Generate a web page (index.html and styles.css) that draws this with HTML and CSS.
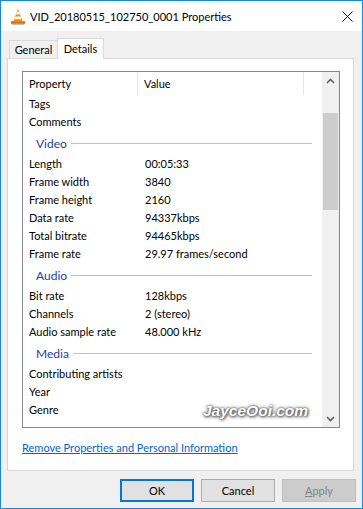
FILE: index.html
```html
<!DOCTYPE html>
<html lang="en">
  <head>
    <meta charset="UTF-8" />
    <meta name="viewport" content="width=device-width, initial-scale=1.0" />
    <title>VID_20180515_102750_0001 Properties</title>
    <link rel="stylesheet" href="styles.css">
  </head>
  <body>
    <div class="window">
      <div class="titlebar">
        <svg class="app_icon" width="16" height="17" viewBox="0 0 16 17">
          <path d="M1 13.2 h14 v2.6 h-14z" fill="#e06a00" />
          <path d="M2 15.6 h12 v1 h-12z" fill="#9a9a9a" />
          <path d="M8 0.6 L12.6 13.4 L3.4 13.4Z" fill="#f28c00" />
          <path d="M6.9 3.8 h2.2 l0.9 2.6 h-4z" fill="#fff" />
          <path d="M5.4 8.4 h5.2 l1 2.8 h-7.2z" fill="#fff" />
        </svg>
        <span class="title">VID_20180515_102750_0001 Properties</span>
        <svg class="close" width="11" height="11" viewBox="0 0 11 11">
          <path d="M0.5 0.5 L10.5 10.5 M10.5 0.5 L0.5 10.5" stroke="#111" stroke-width="1" />
        </svg>
      </div>

      <div class="client">
        <div class="tabs">
          <div class="tab">General</div>
          <div class="tab active">Details</div>
        </div>

        <div class="panel">
          <div class="listbox">
            <div class="list">
              <div class="head">
                <span class="col_prop">Property</span>
                <span class="col_val">Value</span>
              </div>
              <div class="row"><span class="k">Tags</span><span class="v"></span></div>
              <div class="row"><span class="k">Comments</span><span class="v"></span></div>
              <div class="group"><span>Video</span></div>
              <div class="row"><span class="k">Length</span><span class="v">00:05:33</span></div>
              <div class="row"><span class="k">Frame width</span><span class="v">3840</span></div>
              <div class="row"><span class="k">Frame height</span><span class="v">2160</span></div>
              <div class="row"><span class="k">Data rate</span><span class="v">94337kbps</span></div>
              <div class="row"><span class="k">Total bitrate</span><span class="v">94465kbps</span></div>
              <div class="row"><span class="k">Frame rate</span><span class="v">29.97 frames/second</span></div>
              <div class="group"><span>Audio</span></div>
              <div class="row"><span class="k">Bit rate</span><span class="v">128kbps</span></div>
              <div class="row"><span class="k">Channels</span><span class="v">2 (stereo)</span></div>
              <div class="row"><span class="k">Audio sample rate</span><span class="v">48.000 kHz</span></div>
              <div class="group"><span>Media</span></div>
              <div class="row"><span class="k">Contributing artists</span><span class="v"></span></div>
              <div class="row"><span class="k">Year</span><span class="v"></span></div>
              <div class="row"><span class="k">Genre</span><span class="v"></span></div>
            </div>
            <div class="scrollbar">
              <div class="arrow">
                <svg width="9" height="6" viewBox="0 0 9 6"><path d="M1 5 L4.5 1.5 L8 5" fill="none" stroke="#606060" stroke-width="1.6" /></svg>
              </div>
              <div class="track"><div class="thumb"></div></div>
              <div class="arrow">
                <svg width="9" height="6" viewBox="0 0 9 6"><path d="M1 1 L4.5 4.5 L8 1" fill="none" stroke="#606060" stroke-width="1.6" /></svg>
              </div>
            </div>
            <div class="watermark">JayceOoi.com</div>
          </div>
          <a class="remove_link" href="#">Remove Properties and Personal Information</a>
        </div>

        <div class="buttons">
          <button class="btn btn_default">OK</button>
          <button class="btn">Cancel</button>
          <button class="btn btn_disabled"><u>A</u>pply</button>
        </div>
      </div>
    </div>
  </body>
</html>
```

FILE: styles.css
```css
body {
  margin: 0;
  font-family: Lato, "Noto Sans", sans-serif;
  font-size: 11px;
  color: #000;
}
.window {
  width: 363px;
  height: 509px;
  box-sizing: border-box;
  border: 1px solid #1c86dd;
  display: flex;
  flex-direction: column;
  background-color: #f0f0f0;
}
.titlebar {
  height: 30px;
  flex-shrink: 0;
  display: flex;
  align-items: center;
  padding-left: 9px;
  background-color: #fff;
}
.app_icon {
  margin-right: 4px;
}
.title {
  font-size: 11px;
}
.close {
  margin-left: auto;
  margin-right: 9px;
}
.client {
  flex: 1;
}
.tabs {
  height: 27px;
  display: flex;
  align-items: flex-end;
  padding-left: 8px;
}
.tab {
  height: 18px;
  box-sizing: border-box;
  border: 1px solid #d9d9d9;
  border-bottom: none;
  line-height: 17px;
  text-align: center;
}
.tab:first-child {
  width: 49px;
}
.tab.active {
  width: 47px;
  height: 21px;
  line-height: 19px;
  margin-left: -1px;
  margin-bottom: -1px;
  background-color: #fff;
  position: relative;
  z-index: 1;
}
.panel {
  height: 413px;
  box-sizing: border-box;
  margin: 0 8px 0 6px;
  padding: 12px 0 0 14px;
  border: 1px solid #d9d9d9;
  background-color: #fff;
}
.listbox {
  position: relative;
  width: 318px;
  height: 357px;
  box-sizing: border-box;
  border: 1px solid #828790;
  display: flex;
}
.list {
  flex: 1;
  overflow: hidden;
}
.head {
  display: flex;
  height: 23px;
  line-height: 24px;
}
.col_prop {
  width: 115px;
  box-sizing: border-box;
  padding-left: 6px;
  border-right: 1px solid #e5e5e5;
}
.col_val {
  width: 166px;
  box-sizing: border-box;
  padding-left: 6px;
  border-right: 1px solid #e5e5e5;
}
.row {
  display: flex;
  height: 18px;
  line-height: 18px;
}
.k {
  width: 115px;
  box-sizing: border-box;
  padding-left: 6px;
  white-space: nowrap;
}
.v {
  padding-left: 7px;
  white-space: nowrap;
}
.group {
  height: 24px;
  display: flex;
  align-items: center;
  gap: 4px;
  padding: 0 10px 0 13px;
  font-size: 12px;
  color: #2340a4;
}
.group::after {
  content: "";
  flex: 1;
  height: 1px;
  background-color: #b6c3dc;
}
.scrollbar {
  width: 17px;
  display: flex;
  flex-direction: column;
  background-color: #f0f0f0;
}
.arrow {
  height: 17px;
  display: flex;
  align-items: center;
  justify-content: center;
}
.track {
  flex: 1;
  padding-top: 24px;
}
.thumb {
  height: 97px;
  margin: 0 1px;
  background-color: #cdcdcd;
}
.watermark {
  position: absolute;
  left: 180px;
  top: 330px;
  font-family: "Liberation Sans", sans-serif;
  font-size: 15.5px;
  font-weight: bold;
  font-style: italic;
  color: #fff;
  text-shadow: 0 0 2px #444, 1px 1px 3px #555, 0 0 4px #888;
}
.remove_link {
  display: block;
  margin-top: 12px;
  line-height: 15px;
  color: #0066cc;
  text-decoration: underline;
}
.buttons {
  display: flex;
  justify-content: flex-end;
  gap: 7px;
  padding: 8px 6px 0 0;
}
.btn {
  width: 74px;
  height: 23px;
  box-sizing: border-box;
  border: 1px solid #adadad;
  background-color: #e1e1e1;
  font-family: inherit;
  font-size: 11px;
  color: #000;
  padding: 0;
}
.btn_default {
  border: 2px solid #0078d7;
}
.btn_disabled {
  background-color: #cccccc;
  border-color: #bfbfbf;
  color: #838383;
}
```
